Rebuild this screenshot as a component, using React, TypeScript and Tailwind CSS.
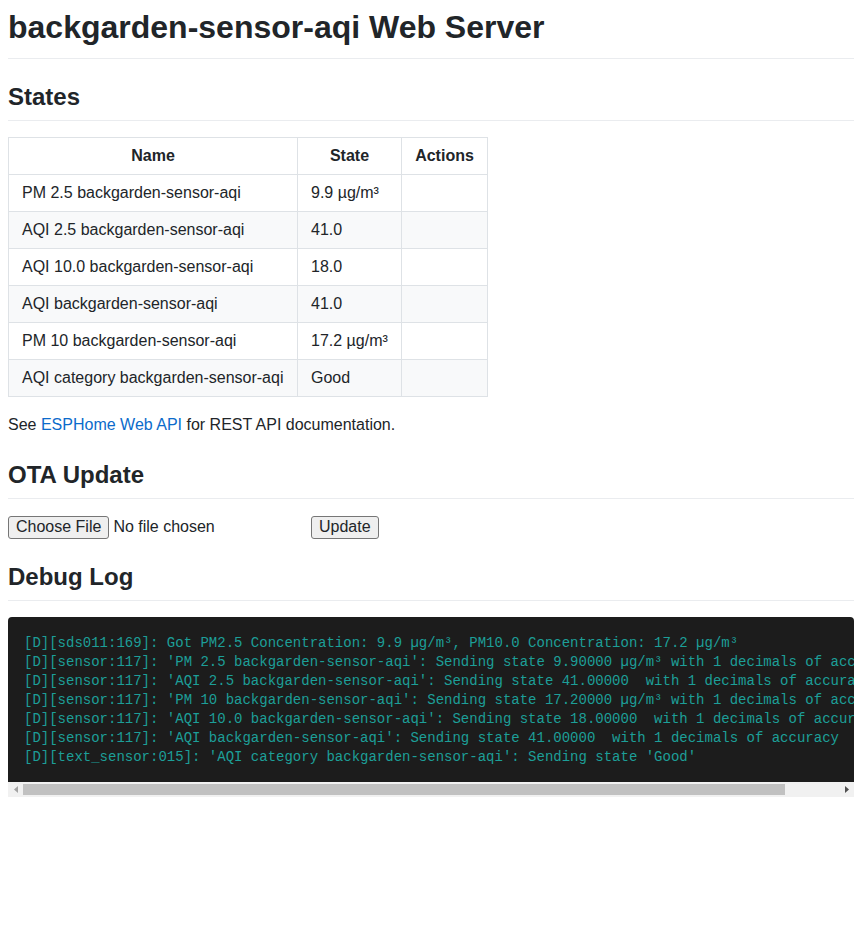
const rows = [
  { name: 'PM 2.5 backgarden-sensor-aqi', state: '9.9 µg/m³' },
  { name: 'AQI 2.5 backgarden-sensor-aqi', state: '41.0' },
  { name: 'AQI 10.0 backgarden-sensor-aqi', state: '18.0' },
  { name: 'AQI backgarden-sensor-aqi', state: '41.0' },
  { name: 'PM 10 backgarden-sensor-aqi', state: '17.2 µg/m³' },
  { name: 'AQI category backgarden-sensor-aqi', state: 'Good' },
]

const logLines = [
  '[D][sds011:169]: Got PM2.5 Concentration: 9.9 µg/m³, PM10.0 Concentration: 17.2 µg/m³',
  "[D][sensor:117]: 'PM 2.5 backgarden-sensor-aqi': Sending state 9.90000 µg/m³ with 1 decimals of accuracy",
  "[D][sensor:117]: 'AQI 2.5 backgarden-sensor-aqi': Sending state 41.00000  with 1 decimals of accuracy",
  "[D][sensor:117]: 'PM 10 backgarden-sensor-aqi': Sending state 17.20000 µg/m³ with 1 decimals of accuracy",
  "[D][sensor:117]: 'AQI 10.0 backgarden-sensor-aqi': Sending state 18.00000  with 1 decimals of accuracy",
  "[D][sensor:117]: 'AQI backgarden-sensor-aqi': Sending state 41.00000  with 1 decimals of accuracy",
  "[D][text_sensor:015]: 'AQI category backgarden-sensor-aqi': Sending state 'Good'",
]

function SectionTitle({ children }: { children: string }) {
  return (
    <h2 className="mt-6 pb-2 border-b border-[#eaecef] text-[24px] leading-[28.8px] font-bold">
      {children}
    </h2>
  )
}

export default function App() {
  return (
    <div className="p-2 bg-white text-[#212529] text-[16px] font-['Liberation_Sans',Arial,sans-serif]">
      <h1 className="pb-3 border-b border-[#eaecef] text-[32px] leading-[38.4px] font-bold">
        backgarden-sensor-aqi Web Server
      </h1>

      <SectionTitle>States</SectionTitle>
      <table className="mt-4 table-fixed w-[480px] border-collapse">
        <colgroup>
          <col className="w-[289px]" />
          <col className="w-[104px]" />
          <col className="w-[86px]" />
        </colgroup>
        <thead>
          <tr>
            <th className="border border-[#dee2e6] px-[13px] py-2 leading-5 font-bold text-center">Name</th>
            <th className="border border-[#dee2e6] px-[13px] py-2 leading-5 font-bold text-center">State</th>
            <th className="border border-[#dee2e6] px-[13px] py-2 leading-5 font-bold text-center">Actions</th>
          </tr>
        </thead>
        <tbody>
          {rows.map((r, i) => (
            <tr key={r.name} className={i % 2 === 1 ? 'bg-[#f8f9fa]' : 'bg-white'}>
              <td className="border border-[#dee2e6] px-[13px] py-2 leading-5 whitespace-nowrap">{r.name}</td>
              <td className="border border-[#dee2e6] px-[13px] py-2 leading-5 whitespace-nowrap">{r.state}</td>
              <td className="border border-[#dee2e6] px-[13px] py-2 leading-5"></td>
            </tr>
          ))}
        </tbody>
      </table>

      <p className="mt-4 leading-6">
        See <a href="#" className="text-[#0b6bcb]">ESPHome Web API</a> for REST API documentation.
      </p>

      <SectionTitle>OTA Update</SectionTitle>
      <form className="mt-4 h-[24px] flex items-center gap-1">
        <div className="w-[299px] flex items-center gap-1">
          <button type="button" className="h-[23px] px-[7px] border border-[#767676] rounded-[3px] bg-[#efefef] leading-none">
            Choose File
          </button>
          <span>No file chosen</span>
        </div>
        <button type="button" className="h-[23px] px-[7px] border border-[#767676] rounded-[3px] bg-[#efefef] leading-none">
          Update
        </button>
      </form>

      <SectionTitle>Debug Log</SectionTitle>
      <div className="mt-4">
        <pre className="bg-[#1c1c1c] rounded-t-[4px] px-4 pt-[17px] pb-[15px] overflow-hidden text-[#1c9f98] text-[14px] leading-[19px] font-['Liberation_Mono','Courier_New',monospace]">
          {logLines.map((l) => (
            <div key={l}>{l}</div>
          ))}
        </pre>
        <div className="h-[15px] bg-[#f1f1f1] flex items-center">
          <div className="w-[15px] flex justify-center">
            <svg width="4" height="7" viewBox="0 0 4 7">
              <path d="M4 0 L0 3.5 L4 7 Z" fill="#a3a3a3" />
            </svg>
          </div>
          <div className="w-[762px] h-[11px] bg-[#c1c1c1]" />
          <div className="flex-1" />
          <div className="w-[15px] flex justify-center">
            <svg width="4" height="7" viewBox="0 0 4 7">
              <path d="M0 0 L4 3.5 L0 7 Z" fill="#505050" />
            </svg>
          </div>
        </div>
      </div>
    </div>
  )
}
